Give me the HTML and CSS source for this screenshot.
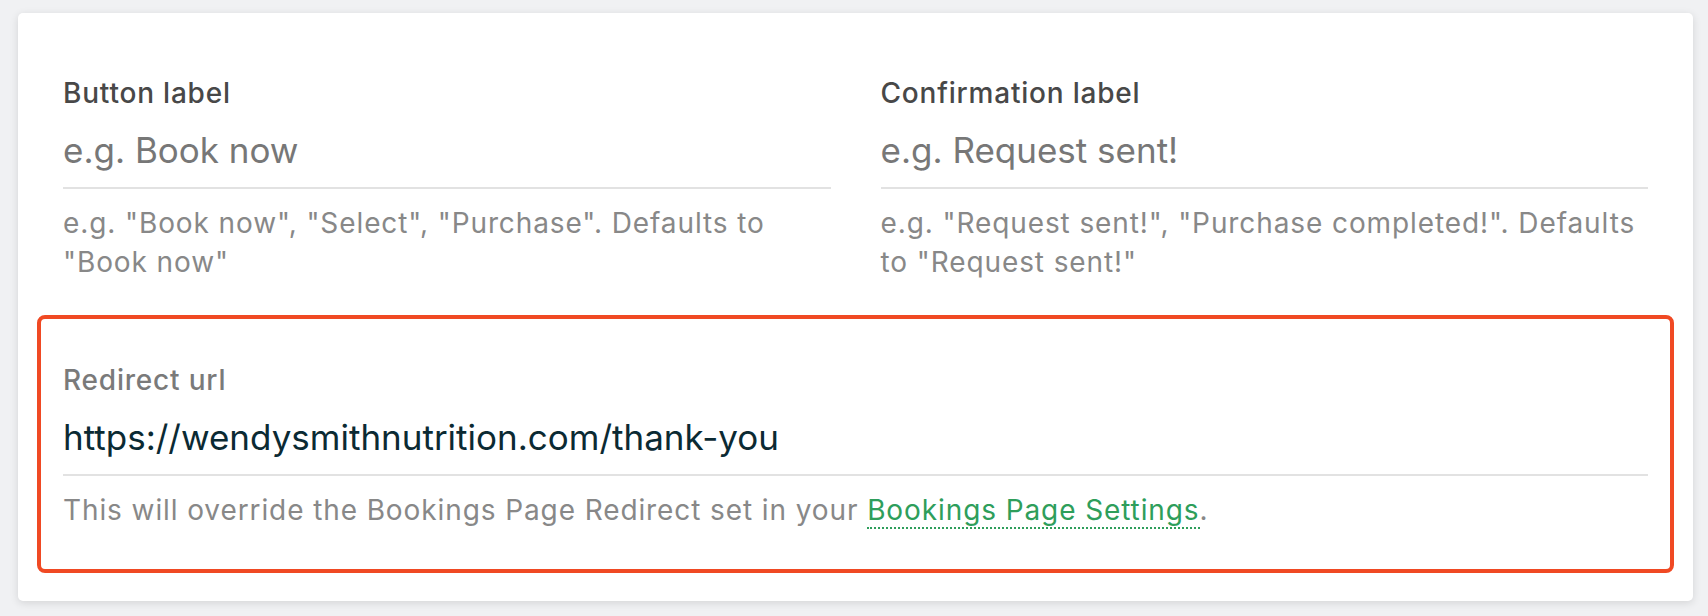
FILE: index.html
```html
<!DOCTYPE html>
<html lang="en">
<head>
    <meta charset="UTF-8">
    <meta name="viewport" content="width=device-width, initial-scale=1.0">
    <title>Booking Button Settings</title>
    <link rel="stylesheet" href="styles.css">
</head>
<body>
    <div class="card">
        <div class="field-row">
            <div class="field">
                <label class="field-label" for="button-label">Button label</label>
                <input class="field-input" type="text" id="button-label" placeholder="e.g. Book now">
                <p class="field-help">e.g. "Book now", "Select", "Purchase". Defaults to "Book now"</p>
            </div>
            <div class="field">
                <label class="field-label" for="confirm-label">Confirmation label</label>
                <input class="field-input" type="text" id="confirm-label" placeholder="e.g. Request sent!">
                <p class="field-help">e.g. "Request sent!", "Purchase completed!". Defaults to "Request sent!"</p>
            </div>
        </div>
        <div class="highlight">
            <div class="field">
                <label class="field-label muted" for="redirect-url">Redirect url</label>
                <input class="field-input filled" type="text" id="redirect-url" value="https://wendysmithnutrition.com/thank-you">
                <p class="field-help">This will override the Bookings Page Redirect set in your <a href="#" class="help-link">Bookings Page Settings</a>.</p>
            </div>
        </div>
    </div>
</body>
</html>
```

FILE: styles.css
```css
body {
    font-family: Inter, "Noto Sans", sans-serif;
    background-color: #f0f1f3;
    margin: 0;
    padding: 13px 15px 17px 18px;
}

.card {
    background-color: #fff;
    border-radius: 5px;
    box-shadow: 0 2px 8px rgba(0, 0, 0, 0.12);
    padding: 60px 45px 28px;
}

.field-row {
    display: grid;
    grid-template-columns: 1fr 1fr;
    column-gap: 50px;
}

.field {
    display: flex;
    flex-direction: column;
}

.field-label {
    font-size: 28px;
    line-height: 40px;
    font-weight: 500;
    letter-spacing: 0.8px;
    color: #484848;
}

.field-label.muted {
    color: #7a7a7a;
}

.field-input {
    font-family: inherit;
    font-size: 35px;
    height: 44px;
    line-height: 44px;
    margin-top: 15px;
    padding: 0 0 15px;
    border: none;
    border-bottom: 2px solid #e2e2e2;
    background: transparent;
    outline: none;
    color: #0b2a33;
    box-sizing: content-box;
}

.field-input::placeholder {
    color: #777;
}

.field-help {
    margin: 15px 0 0;
    font-size: 28px;
    line-height: 39px;
    letter-spacing: 0.9px;
    color: #888;
}

.help-link {
    color: #2e9e5b;
    text-decoration: none;
    border-bottom: 2px dotted #2e9e5b;
}

.highlight {
    margin: 33px -26px 0;
    border: 4px solid #f04923;
    border-radius: 8px;
    padding: 41px 22px 39px;
}
```
